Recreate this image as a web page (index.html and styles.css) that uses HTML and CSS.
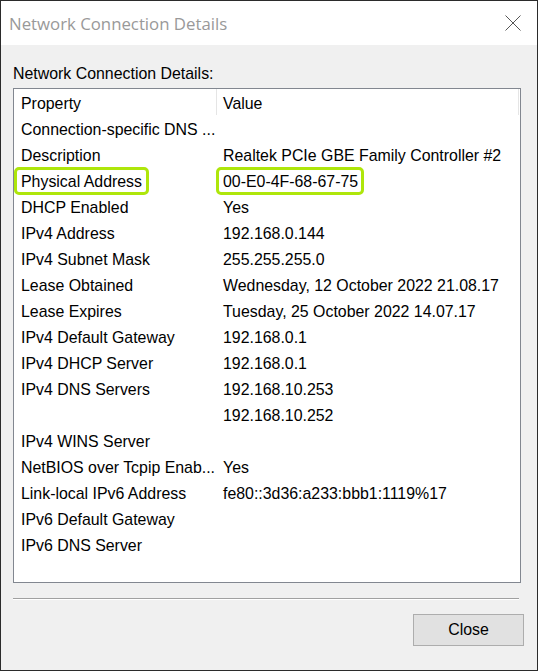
FILE: index.html
```html
<!DOCTYPE html>
<html>
<head>
<meta charset="utf-8">
<link rel="stylesheet" href="styles.css">
</head>
<body>
<div class="window">
  <div class="titlebar">
    <span class="title">Network Connection Details</span>
    <svg class="close-x" width="16" height="16" viewBox="0 0 16 16"><path d="M0.5 0.5 L15.5 15.5 M15.5 0.5 L0.5 15.5" stroke="#555" stroke-width="1" fill="none"/></svg>
  </div>
  <div class="content">
    <div class="label">Network Connection Details:</div>
    <div class="listbox">
      <div class="row header">
        <div class="c1">Property</div>
        <div class="c2">Value</div>
        <div class="c3"></div>
      </div>
      <div class="row"><div class="c1">Connection-specific DNS ...</div><div class="c2"></div></div>
      <div class="row"><div class="c1">Description</div><div class="c2">Realtek PCIe GBE Family Controller #2</div></div>
      <div class="row"><div class="c1"><span class="hl hl1">Physical Address</span></div><div class="c2"><span class="hl hl2">00-E0-4F-68-67-75</span></div></div>
      <div class="row"><div class="c1">DHCP Enabled</div><div class="c2">Yes</div></div>
      <div class="row"><div class="c1">IPv4 Address</div><div class="c2">192.168.0.144</div></div>
      <div class="row"><div class="c1">IPv4 Subnet Mask</div><div class="c2">255.255.255.0</div></div>
      <div class="row"><div class="c1">Lease Obtained</div><div class="c2">Wednesday, 12 October 2022 21.08.17</div></div>
      <div class="row"><div class="c1">Lease Expires</div><div class="c2">Tuesday, 25 October 2022 14.07.17</div></div>
      <div class="row"><div class="c1">IPv4 Default Gateway</div><div class="c2">192.168.0.1</div></div>
      <div class="row"><div class="c1">IPv4 DHCP Server</div><div class="c2">192.168.0.1</div></div>
      <div class="row"><div class="c1">IPv4 DNS Servers</div><div class="c2">192.168.10.253</div></div>
      <div class="row"><div class="c1"></div><div class="c2">192.168.10.252</div></div>
      <div class="row"><div class="c1">IPv4 WINS Server</div><div class="c2"></div></div>
      <div class="row"><div class="c1">NetBIOS over Tcpip Enab...</div><div class="c2">Yes</div></div>
      <div class="row"><div class="c1">Link-local IPv6 Address</div><div class="c2">fe80::3d36:a233:bbb1:1119%17</div></div>
      <div class="row"><div class="c1">IPv6 Default Gateway</div><div class="c2"></div></div>
      <div class="row"><div class="c1">IPv6 DNS Server</div><div class="c2"></div></div>
    </div>
    <div class="separator"></div>
    <div class="buttons">
      <button class="btn">Close</button>
    </div>
  </div>
</div>
</body>
</html>
```

FILE: styles.css
```css
html, body {
  margin: 0;
  padding: 0;
  background: #f0f0f0;
}
.window {
  width: 538px;
  height: 671px;
  box-sizing: border-box;
  border: 1px solid #2b2b2b;
  background: #f0f0f0;
  font-family: "Liberation Sans", Arial, sans-serif;
  font-size: 15.9px;
  color: #000;
  display: flex;
  flex-direction: column;
}
.titlebar {
  height: 44px;
  background: #fff;
  display: flex;
  align-items: center;
  justify-content: space-between;
  padding: 0 16px 0 8px;
  flex-shrink: 0;
}
.title {
  font-family: "Open Sans", "Noto Sans", sans-serif;
  font-size: 16.8px;
  color: #999;
  padding-top: 1px;
}
.close-x {
  display: block;
}
.content {
  padding: 19px 16px 0 12px;
}
.label {
  line-height: 20px;
  height: 20px;
  margin-bottom: 4px;
}
.listbox {
  width: 508px;
  height: 495px;
  box-sizing: border-box;
  border: 1px solid #828790;
  background: #fff;
  overflow: hidden;
}
.row {
  display: flex;
  height: 26px;
  line-height: 26px;
  white-space: nowrap;
}
.row > div {
  padding-top: 2px;
  box-sizing: border-box;
}
.c1 {
  width: 202px;
  padding-left: 7px;
  flex-shrink: 0;
}
.c2 {
  padding-left: 7px;
  flex: 1;
}
.header .c2 {
  border-left: 1px solid #e5e5e5;
  padding-left: 6px;
}
.header > div {
  height: 26px;
}
.header .c3 {
  width: 1px;
  margin-right: 1px;
  background: #e5e5e5;
}
.hl {
  display: inline-block;
  box-sizing: border-box;
  height: 28px;
  border: 3px solid #aee60b;
  border-radius: 5px;
  line-height: 21px;
  padding: 1px 0 0 4px;
  margin: -2px 0 0 -7px;
  vertical-align: top;
}
.hl1 {
  width: 135px;
}
.hl2 {
  width: 148px;
}
.separator {
  width: 506px;
  height: 0;
  border-top: 1px solid #a0a0a0;
  border-bottom: 1px solid #fff;
  margin-top: 15px;
}
.buttons {
  display: flex;
  justify-content: flex-end;
  margin-top: 14px;
  margin-right: -3px;
}
.btn {
  width: 111px;
  height: 32px;
  box-sizing: border-box;
  background: #e1e1e1;
  border: 1px solid #adadad;
  font-family: "Liberation Sans", Arial, sans-serif;
  font-size: 15.9px;
  color: #000;
  padding: 0;
}
```
